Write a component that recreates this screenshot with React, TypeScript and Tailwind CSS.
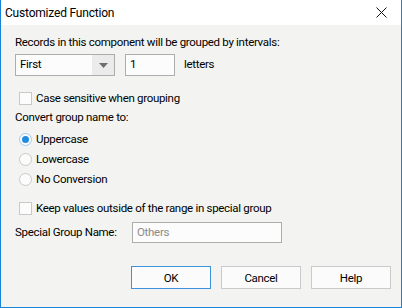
import React from "react";

const font = { fontFamily: 'Roboto, "Noto Sans", sans-serif' };

function Checkbox({ label }: { label: string }) {
  return (
    <div className="flex items-center h-[16px] pl-[4px]">
      <div className="w-[13px] h-[13px] border border-[#c8c9c8] bg-[#fbfcfb] shrink-0" />
      <span className="ml-[4px] leading-[16px] whitespace-nowrap">{label}</span>
    </div>
  );
}

function Radio({ label, checked }: { label: string; checked?: boolean }) {
  return (
    <div className="flex items-center h-[20px] pl-[4px]">
      <div
        className={`w-[13px] h-[13px] rounded-full border shrink-0 flex items-center justify-center bg-[#fbfcfb] ${
          checked ? "border-[#a6c8e8]" : "border-[#c8c9c8]"
        }`}
      >
        {checked && <div className="w-[7px] h-[7px] rounded-full bg-[#1f8ce0]" />}
      </div>
      <span className="ml-[4px] leading-[16px] whitespace-nowrap">{label}</span>
    </div>
  );
}

export default function App() {
  return (
    <div
      className="w-[402px] h-[308px] flex flex-col border-x border-b border-[#1883d7] bg-[#f3f4f2] text-[11.5px] tracking-[-0.3px] text-black overflow-hidden"
      style={font}
    >
      <div className="h-[25px] bg-white flex items-center justify-between pl-[4px] pr-[14px] shrink-0">
        <span className="text-[12px] tracking-[-0.2px] leading-[16px]">Customized Function</span>
        <svg width="11" height="11" viewBox="0 0 11 11">
          <path d="M0.5 0.5 L10.5 10.5 M10.5 0.5 L0.5 10.5" stroke="#111" strokeWidth="1" />
        </svg>
      </div>
      <div className="flex flex-col pl-[14px] pr-[10px]">
        <div className="mt-[9px] leading-[16px] whitespace-nowrap">Records in this component will be grouped by intervals:</div>
        <div className="mt-[4px] flex items-center h-[22px]">
          <div className="w-[100px] h-[22px] border border-[#adadad] bg-[#fbfcfb] flex items-center">
            <span className="pl-[4px] flex-1">First</span>
            <div className="w-[22px] h-full bg-[#eaebea] flex items-center justify-center">
              <svg width="9" height="5" viewBox="0 0 9 5">
                <path d="M0 0 H9 L4.5 5 Z" fill="#6e6e6e" />
              </svg>
            </div>
          </div>
          <div className="ml-[10px] w-[50px] h-[22px] border border-[#adadad] bg-[#fbfcfb] flex items-center pl-[4px]">
            1
          </div>
          <span className="ml-[9px]">letters</span>
        </div>
        <div className="mt-[14px]">
          <Checkbox label="Case sensitive when grouping" />
        </div>
        <div className="mt-[3px] leading-[16px]">Convert group name to:</div>
        <div className="mt-[4px] flex flex-col">
          <Radio label="Uppercase" checked />
          <Radio label="Lowercase" />
          <Radio label="No Conversion" />
        </div>
        <div className="mt-[11px]">
          <Checkbox label="Keep values outside of the range in special group" />
        </div>
        <div className="mt-[6px] flex items-center h-[21px]">
          <span className="w-[117px] whitespace-nowrap">Special Group Name:</span>
          <div className="w-[150px] h-[21px] border border-[#adadad] bg-[#fbfcfb] flex items-center pl-[4px] text-[#8a8a8a]">
            Others
          </div>
        </div>
        <div className="mt-[23px] flex justify-end gap-[10px]">
          <button className="w-[80px] h-[23px] border border-[#3a93dc] bg-[#fafbfa] leading-[16px]">OK</button>
          <button className="w-[80px] h-[23px] border border-[#c9cac9] bg-[#fafbfa] leading-[16px]">Cancel</button>
          <button className="w-[80px] h-[23px] border border-[#c9cac9] bg-[#fafbfa] leading-[16px]">Help</button>
        </div>
      </div>
    </div>
  );
}
